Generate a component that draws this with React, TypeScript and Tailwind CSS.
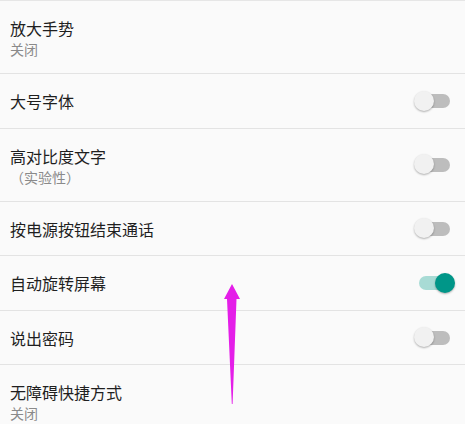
import React from "react";

function Toggle({ on }: { on: boolean }) {
  return (
    <div className="relative w-[42px] h-[21px] mr-[9px]">
      <div
        className={
          "absolute left-[5px] top-[3.5px] w-[31px] h-[14px] rounded-full " +
          (on ? "bg-[#a8dbd5]" : "bg-[#bdbdbd]")
        }
      />
      <div
        className={
          "absolute top-0 w-[20px] h-[20px] rounded-full shadow-[0_1px_2px_rgba(0,0,0,0.3)] " +
          (on ? "left-[21px] bg-[#009688]" : "left-0 bg-[#f1f1f1]")
        }
      />
    </div>
  );
}

export default function App() {
  const font = { fontFamily: '"Noto Sans CJK SC", "Noto Sans", sans-serif' };
  return (
    <div
      className="relative w-[465px] h-[424px] overflow-hidden bg-[#fafafa] border-t border-[#e6e6e6]"
      style={font}
    >
      {/* Row 1 */}
      <div className="h-[73px] border-b border-[#e3e3e3] pl-[10px] pt-[16px] flex flex-col">
        <div className="text-[16px] leading-[22px] text-[#1f1f1f]">放大手势</div>
        <div className="text-[14px] leading-[20px] text-[#8a8a8a]">关闭</div>
      </div>
      {/* Row 2 */}
      <div className="h-[55px] border-b border-[#e3e3e3] pl-[10px] flex items-center justify-between">
        <div className="text-[16px] leading-[22px] text-[#1f1f1f]">大号字体</div>
        <Toggle on={false} />
      </div>
      {/* Row 3 */}
      <div className="h-[73px] border-b border-[#e3e3e3] pl-[10px] pt-[16px] flex items-start justify-between">
        <div className="flex flex-col">
          <div className="text-[16px] leading-[22px] text-[#1f1f1f]">高对比度文字</div>
          <div className="text-[14px] leading-[20px] text-[#8a8a8a]">（实验性）</div>
        </div>
        <div className="mt-[9px]">
          <Toggle on={false} />
        </div>
      </div>
      {/* Row 4 */}
      <div className="h-[54px] border-b border-[#e3e3e3] pl-[10px] flex items-center justify-between">
        <div className="text-[16px] leading-[22px] text-[#1f1f1f]">按电源按钮结束通话</div>
        <Toggle on={false} />
      </div>
      {/* Row 5 */}
      <div className="h-[55px] border-b border-[#e3e3e3] pl-[10px] flex items-center justify-between">
        <div className="text-[16px] leading-[22px] text-[#1f1f1f]">自动旋转屏幕</div>
        <Toggle on={true} />
      </div>
      {/* Row 6 */}
      <div className="h-[54px] border-b border-[#e3e3e3] pl-[10px] flex items-center justify-between">
        <div className="text-[16px] leading-[22px] text-[#1f1f1f]">说出密码</div>
        <Toggle on={false} />
      </div>
      {/* Row 7 */}
      <div className="pl-[10px] pt-[16px] flex flex-col">
        <div className="text-[16px] leading-[22px] text-[#1f1f1f]">无障碍快捷方式</div>
        <div className="text-[14px] leading-[20px] text-[#8a8a8a]">关闭</div>
      </div>

      {/* Arrow overlay */}
      <svg
        className="absolute left-0 top-0 pointer-events-none"
        width="465"
        height="424"
        viewBox="0 0 465 424"
      >
        <polygon
          points="232,283 240,298 236.5,298 232.6,403 231.8,403 227,298 224,298"
          fill="#e41ee8"
        />
      </svg>
    </div>
  );
}
